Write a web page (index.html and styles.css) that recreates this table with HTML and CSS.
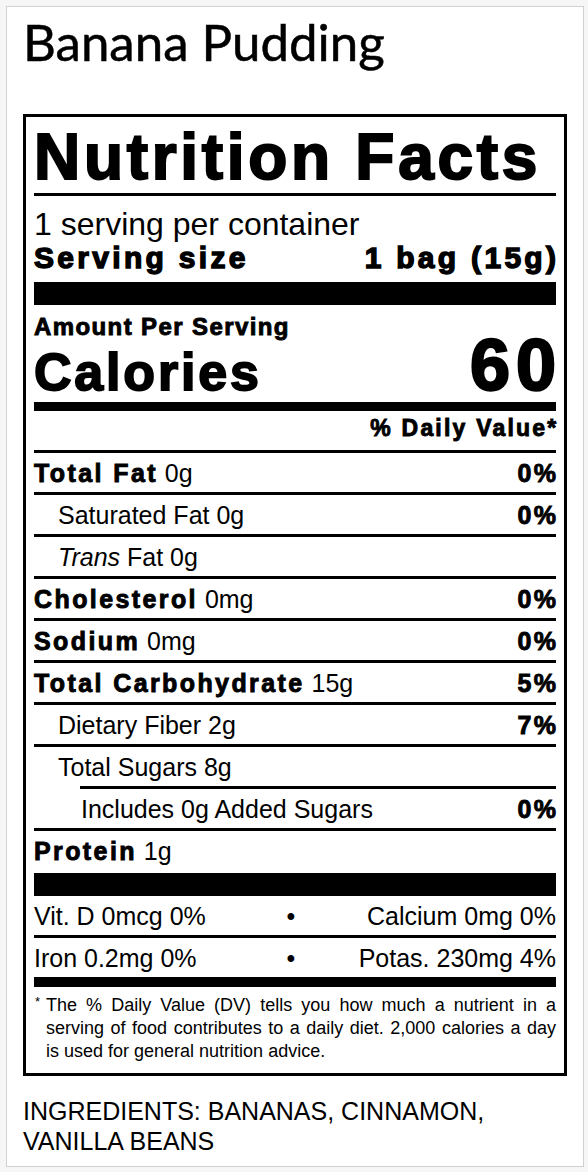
FILE: index.html
```
<!DOCTYPE html>
<html lang="en">

<head>
    <meta charset="UTF-8">
    <meta name="viewport" content="width=device-width, initial-scale=1.0">
    <title>Banana Pudding - Nutrition Facts</title>
    <link rel="stylesheet" href="styles.css">
</head>

<body>
    <div class="card">
        <h1 class="card-tit">Banana Pudding</h1>

        <div class="label">
            <h2 class="label-tit">Nutrition Facts</h2>

            <div class="serving">
                <div class="serving-per">1 serving per container</div>
                <div class="serving-size">
                    <b class="heavy">Serving size</b>
                    <b class="heavy val">1 bag (15g)</b>
                </div>
            </div>

            <div class="calories">
                <div class="amount heavy">Amount Per Serving</div>
                <div class="cal-row">
                    <b class="cal-name heavy">Calories</b>
                    <b class="cal-num heavy">60</b>
                </div>
            </div>

            <div class="dv-head"><b class="heavy val">% Daily Value*</b></div>

            <div class="row">
                <span><b class="heavy">Total Fat</b> 0g</span>
                <b class="heavy val">0%</b>
            </div>
            <div class="row sub">
                <span>Saturated Fat 0g</span>
                <b class="heavy val">0%</b>
            </div>
            <div class="row sub">
                <span><i>Trans</i> Fat 0g</span>
            </div>
            <div class="row">
                <span><b class="heavy">Cholesterol</b> 0mg</span>
                <b class="heavy val">0%</b>
            </div>
            <div class="row">
                <span><b class="heavy">Sodium</b> 0mg</span>
                <b class="heavy val">0%</b>
            </div>
            <div class="row">
                <span><b class="heavy">Total Carbohydrate</b> 15g</span>
                <b class="heavy val">5%</b>
            </div>
            <div class="row sub">
                <span>Dietary Fiber 2g</span>
                <b class="heavy val">7%</b>
            </div>
            <div class="row sub">
                <span>Total Sugars 8g</span>
            </div>
            <div class="row added">
                <span>Includes 0g Added Sugars</span>
                <b class="heavy val">0%</b>
            </div>
            <div class="row protein">
                <span><b class="heavy">Protein</b> 1g</span>
            </div>

            <div class="vitamins">
                <div class="vit-row">
                    <span>Vit. D 0mcg 0%</span>
                    <span class="dot">&bull;</span>
                    <span class="vit-right">Calcium 0mg 0%</span>
                </div>
                <div class="vit-row line">
                    <span>Iron 0.2mg 0%</span>
                    <span class="dot">&bull;</span>
                    <span class="vit-right">Potas. 230mg 4%</span>
                </div>
            </div>

            <div class="foot">
                <span class="star">*</span>
                <p>The % Daily Value (DV) tells you how much a nutrient in a serving of food contributes to a daily diet. 2,000 calories a day is used for general nutrition advice.</p>
            </div>
        </div>

        <p class="ingredients">INGREDIENTS: BANANAS, CINNAMON, VANILLA BEANS</p>
    </div>
</body>

</html>
```

FILE: styles.css
```
* {
    padding: 0;
    margin: 0;
    box-sizing: border-box;
}

body {
    background: #f6f6f6;
}

.card {
    margin: 6px 4px 4px 6px;
    padding: 10px 16px 10px;
    background: #fff;
    border: 1px solid #d0d0d0;
    color: #000;
}

.card-tit {
    font-family: "Lato", sans-serif;
    font-size: 51px;
    font-weight: 400;
    line-height: 50px;
    margin-bottom: 47px;
    -webkit-text-stroke: 0.5px #000;
}

/* the black framed label */
.label {
    border: 3px solid #000;
    padding: 8px;
    font-family: "Liberation Sans", Arial, sans-serif;
    font-size: 25px;
}

/* Arial Black is not installed: bold + stroke + spacing comes close */
.heavy {
    font-weight: 700;
    letter-spacing: 2.4px;
    -webkit-text-stroke: 0.9px #000;
}

.val {
    margin-right: -2.4px;
}

.label-tit {
    font-size: 64px;
    line-height: 64px;
    font-weight: 700;
    letter-spacing: 3.7px;
    -webkit-text-stroke: 2px #000;
    padding-bottom: 4px;
    border-bottom: 3px solid #000;
}

.serving {
    padding: 11px 0 7px;
    border-bottom: 23px solid #000;
    font-size: 30px;
    line-height: 34px;
}

.serving-per {
    font-size: 32px;
}

.serving-size {
    display: flex;
    justify-content: space-between;
}

.serving-size .heavy {
    letter-spacing: 3.3px;
    -webkit-text-stroke: 1.4px #000;
}

.serving-size .val {
    margin-right: -3.3px;
}

.calories {
    padding: 9px 0 4px;
    border-bottom: 9px solid #000;
}

.amount {
    font-size: 24px;
    line-height: 25px;
    letter-spacing: 1.4px;
}

.cal-row {
    display: flex;
    justify-content: space-between;
    align-items: baseline;
}

.cal-name {
    font-size: 52px;
    line-height: 52px;
    letter-spacing: 2.8px;
    -webkit-text-stroke: 1.8px #000;
}

.cal-num {
    font-size: 72px;
    line-height: 52px;
    letter-spacing: 6px;
    margin-right: -6px;
    -webkit-text-stroke: 2.4px #000;
}

.dv-head {
    padding: 4px 0 9px;
    line-height: 26px;
    font-size: 23px;
    text-align: right;
}

.dv-head .heavy {
    letter-spacing: 2.2px;
}

.row {
    display: flex;
    justify-content: space-between;
    border-top: 3px solid #000;
    padding-top: 1px;
    line-height: 38px;
}

.row.sub {
    padding-left: 24px;
}

.row.added {
    margin-left: 46px;
    padding-left: 1px;
}

.row.protein {
    padding-bottom: 3px;
}

.vitamins {
    border-top: 23px solid #000;
    border-bottom: 10px solid #000;
}

.vit-row {
    display: grid;
    grid-template-columns: 1fr auto 1fr;
    padding-top: 1px;
    line-height: 38px;
}

.vit-row.line {
    border-top: 3px solid #000;
}

.dot {
    padding-right: 8px;
}

.vit-right {
    text-align: right;
}

.foot {
    display: flex;
    padding: 7px 0 2px 1px;
    font-size: 18px;
    line-height: 23px;
}

.star {
    width: 11px;
    flex: none;
    font-size: 13px;
    line-height: 16px;
}

.foot p {
    text-align: justify;
}

.ingredients {
    margin-top: 20px;
    font-family: "Liberation Sans", Arial, sans-serif;
    font-size: 25px;
    line-height: 30px;
}
```
